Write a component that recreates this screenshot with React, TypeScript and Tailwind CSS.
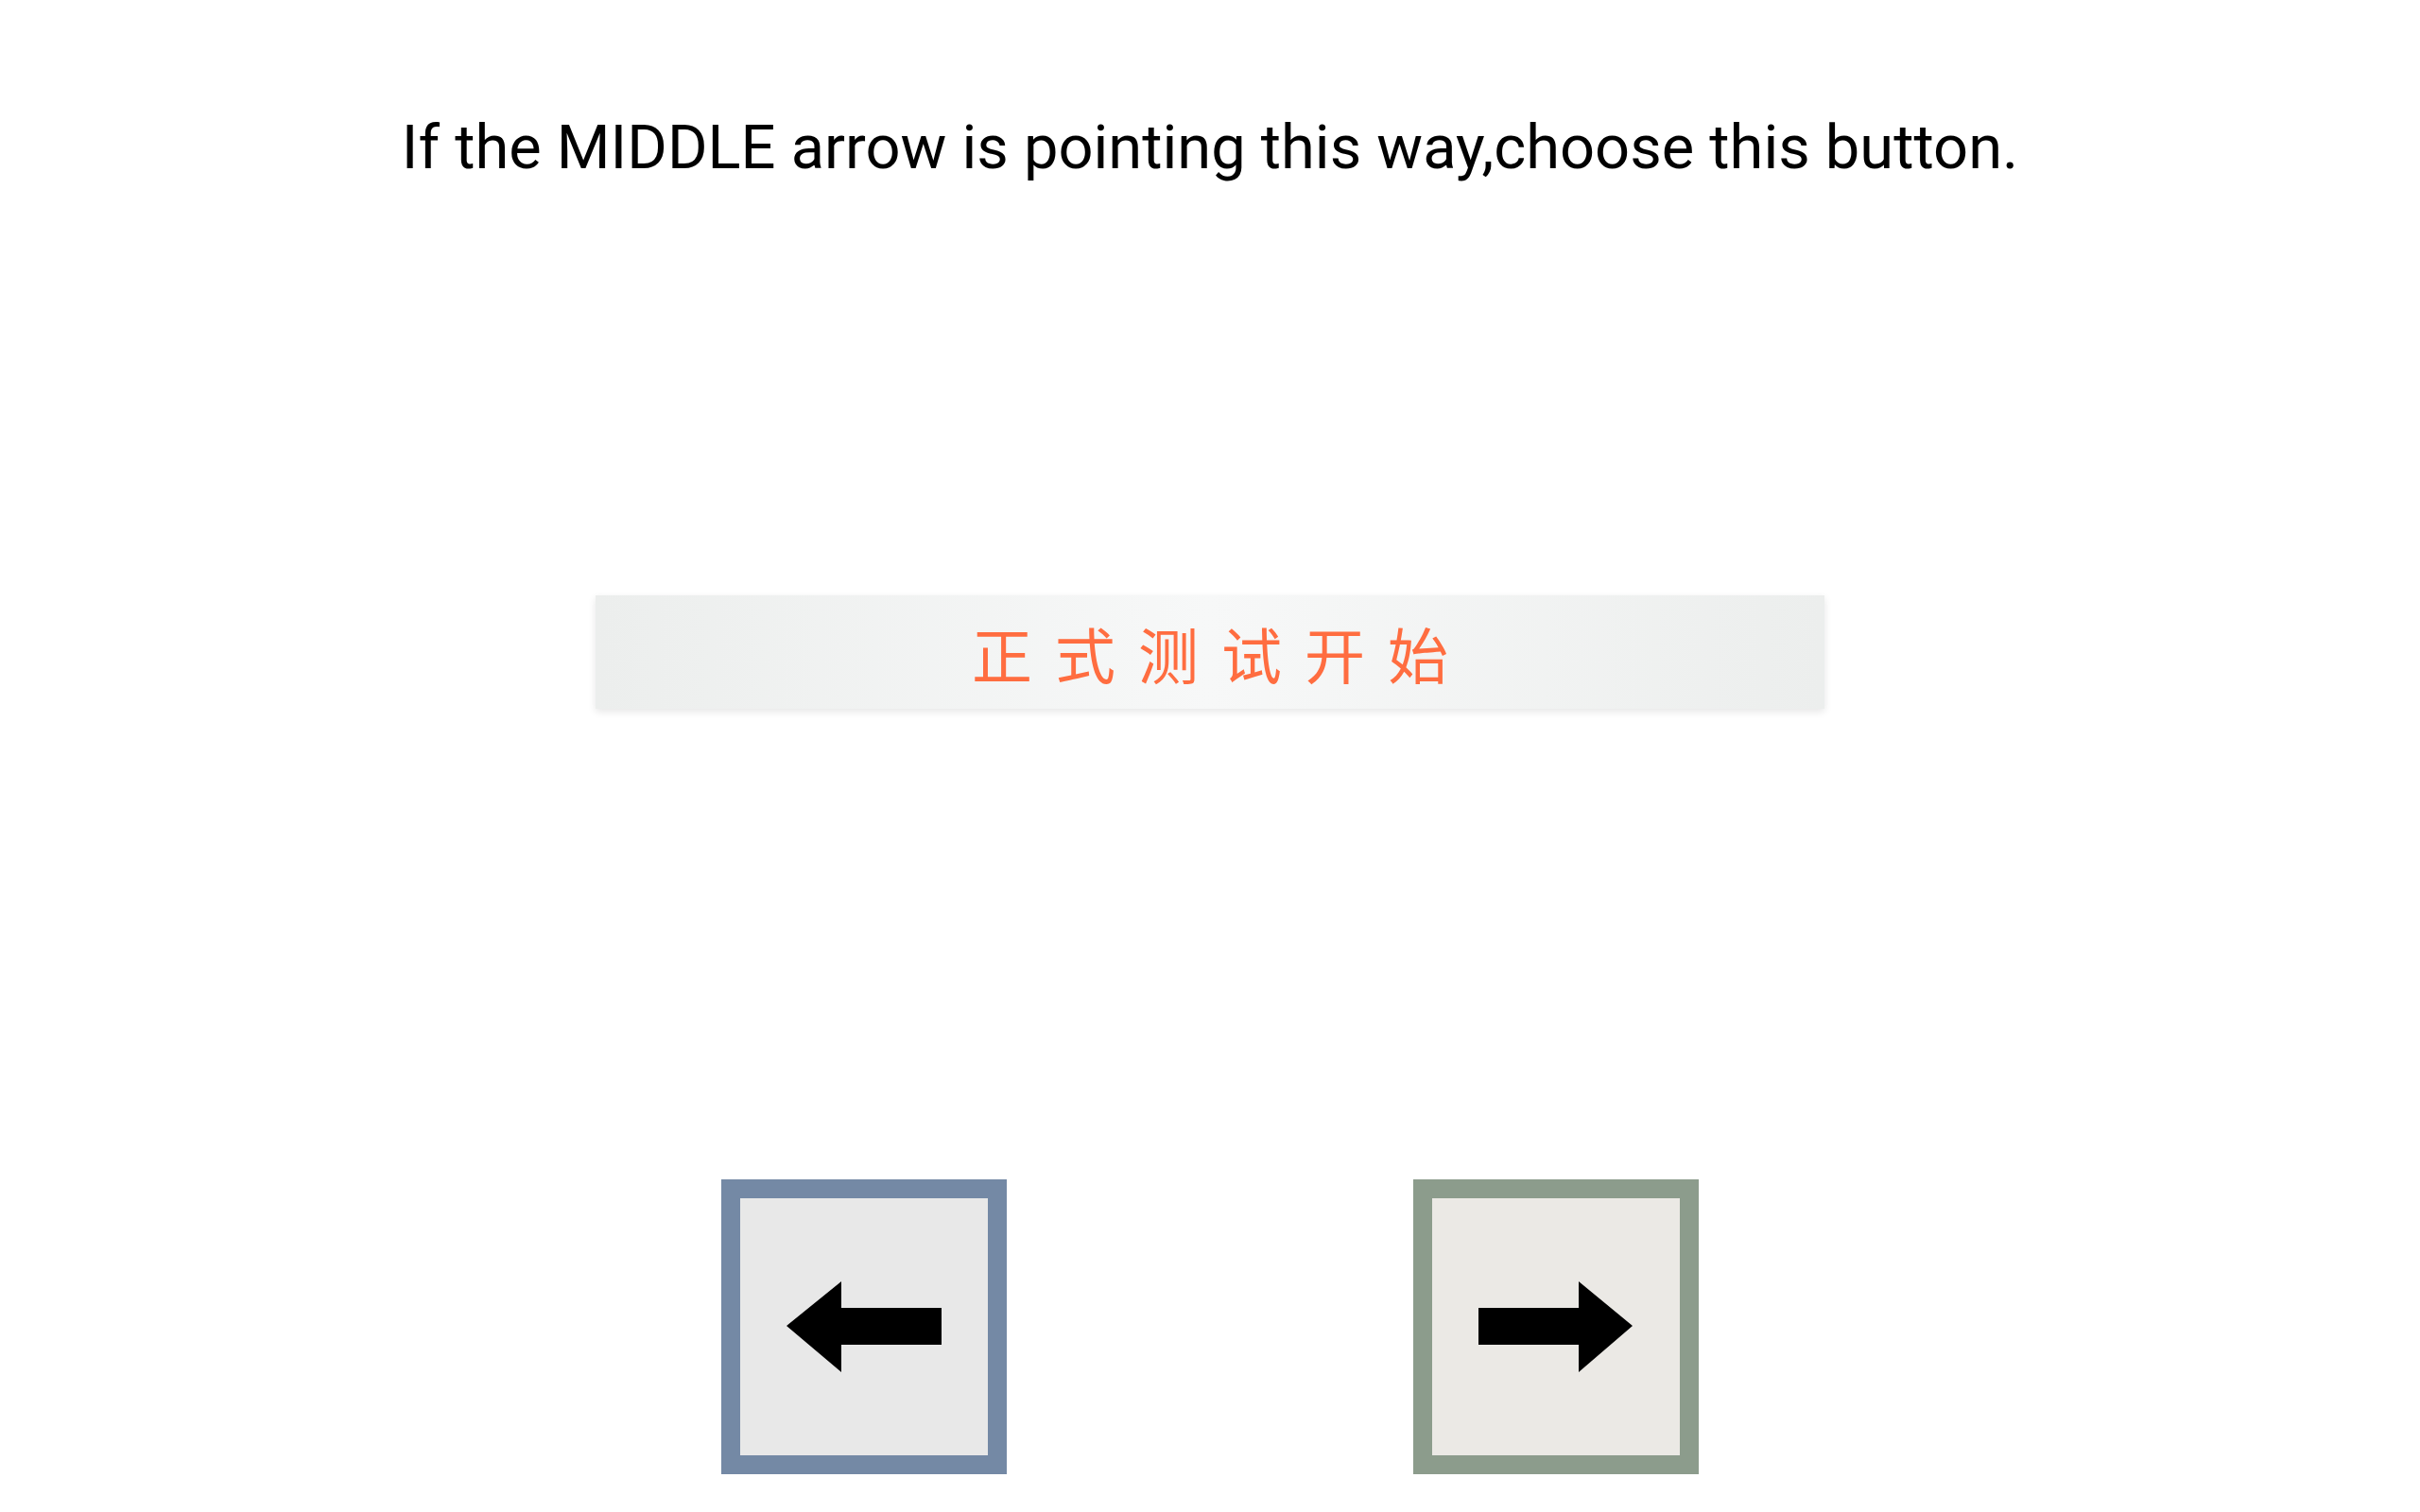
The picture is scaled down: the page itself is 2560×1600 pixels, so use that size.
import React from "react";

function ArrowIcon({ dir }: { dir: "left" | "right" }) {
  const pts =
    dir === "left"
      ? "69,155 127,108 127,136 233,136 233,175 127,175 127,204"
      : "232,155 175,108 175,136 69,136 69,175 175,175 175,204";
  return (
    <svg width="302" height="312" viewBox="0 0 302 312" className="absolute inset-0">
      <polygon points={pts} fill="#000" />
    </svg>
  );
}

export default function App() {
  return (
    <div className="min-h-[1600px] w-[2560px] bg-white flex flex-col items-center" style={{ fontFamily: "Roboto, 'Noto Sans', sans-serif" }}>
      <div className="pt-[124px] h-[189px] text-[65px] leading-[65px] text-black whitespace-nowrap" style={{ fontFamily: "Roboto, sans-serif" }}>
        If the MIDDLE arrow is pointing this way,choose this button.
      </div>
      <div className="mt-[441px] w-[1300px] h-[120px] flex items-center justify-center bg-linear-to-r from-[#eceeed] via-[#f7f8f8] to-[#eceeed] shadow-[0_3px_8px_rgba(0,0,0,0.10)]">
        <span className="text-[64px] leading-[120px] text-[#ff6d40] tracking-[24px] pl-[24px]" style={{ fontFamily: "'Noto Sans CJK SC', sans-serif" }}>
          正式测试开始
        </span>
      </div>
      <div className="mt-[498px] flex gap-[430px]">
        <div className="relative w-[302px] h-[312px] border-[20px] border-[#7489a5] bg-[#e8e8e8] box-border">
          <div className="absolute -inset-[20px]">
            <ArrowIcon dir="left" />
          </div>
        </div>
        <div className="relative w-[302px] h-[312px] border-[20px] border-[#8c9c8c] bg-[#ebe9e5] box-border">
          <div className="absolute -inset-[20px]">
            <ArrowIcon dir="right" />
          </div>
        </div>
      </div>
    </div>
  );
}
